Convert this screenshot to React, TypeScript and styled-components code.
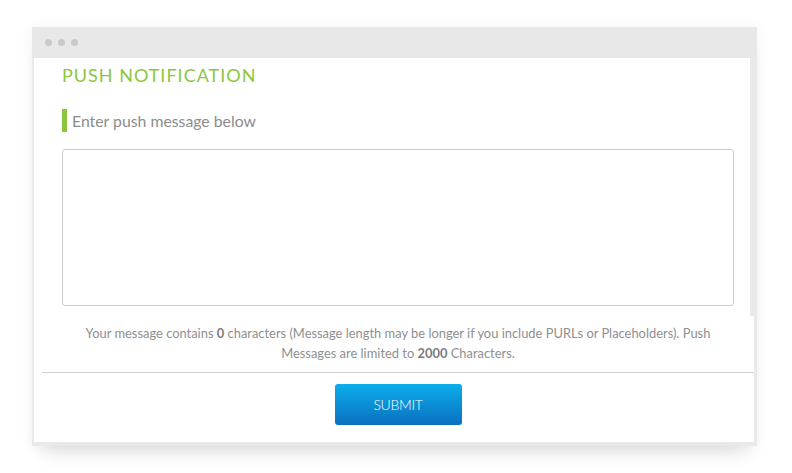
import React from "react";
import styled, { createGlobalStyle } from "styled-components";

const Global = createGlobalStyle`
  html, body { margin: 0; padding: 0; background: #ffffff; }
  body { font-family: Lato, "Open Sans", sans-serif; }
  * { box-sizing: border-box; }
`;

const Stage = styled.div`
  width: 792px;
  height: 473px;
  padding: 27px 0 0 32px;
  overflow: hidden;
`;

const Frame = styled.div`
  width: 725px;
  background: #e7e9ea;
  padding: 0 3px 4px 2px;
  box-shadow: 0 16px 18px -10px rgba(0, 0, 0, 0.12), 0 0 14px rgba(0, 0, 0, 0.05);
`;

const TitleBar = styled.div`
  height: 31px;
  margin: 0 -3px 0 -2px;
  background: #e8e8e8;
  display: flex;
  align-items: center;
  gap: 6px;
  padding-left: 13px;
`;

const Dot = styled.span`
  width: 7px;
  height: 7px;
  border-radius: 50%;
  background: #c9c9c9;
`;

const Upper = styled.div`
  background: #ffffff;
  margin-right: 4px;
  height: 258px;
  padding: 6px 16px 0 28px;
`;

const Title = styled.h1`
  margin: 0;
  font-family: Lato, sans-serif;
  font-weight: 400;
  font-size: 18px;
  line-height: 22px;
  letter-spacing: 1px;
  color: #8cc63e;
`;

const SubHead = styled.div`
  margin-top: 23px;
  height: 23px;
  display: flex;
  align-items: center;
  gap: 5px;
  font-size: 15.8px;
  color: #8c8c8c;
  &::before {
    content: "";
    width: 5px;
    height: 23px;
    background: #8cc63e;
  }
`;

const Message = styled.textarea`
  display: block;
  margin-top: 17px;
  width: 672px;
  height: 157px;
  border: 1px solid #cccccc;
  border-radius: 3px;
  resize: none;
  outline: none;
  background: #fff;
`;

const Lower = styled.div`
  background: #ffffff;
  height: 126px;
  padding-left: 8px;
  display: flex;
  flex-direction: column;
  align-items: center;
`;

const Info = styled.p`
  margin: 7px 0 0;
  width: 660px;
  text-align: center;
  font-size: 12.9px;
  line-height: 20px;
  color: #8f8f8f;
`;

const Count = styled.strong`
  font-weight: 700;
  color: #7c7c7c;
`;

const Divider = styled.hr`
  align-self: stretch;
  margin: 9px 0 0;
  border: 0;
  border-top: 1px solid #cfcfcf;
`;

const Submit = styled.button`
  margin-top: 11px;
  width: 127px;
  height: 41px;
  border: 0;
  border-radius: 3px;
  background: linear-gradient(#0badea, #0a70c0);
  color: #ffffff;
  font-family: Lato, sans-serif;
  font-weight: 300;
  font-size: 14px;
  letter-spacing: -0.3px;
  cursor: pointer;
`;

export default function App() {
  return (
    <>
      <Global />
      <Stage>
        <Frame>
          <TitleBar>
            <Dot />
            <Dot />
            <Dot />
          </TitleBar>
          <Upper>
            <Title>PUSH NOTIFICATION</Title>
            <SubHead>Enter push message below</SubHead>
            <Message />
          </Upper>
          <Lower>
            <Info>
              Your message contains <Count>0</Count> characters (Message length may be longer if you
              include PURLs or Placeholders). Push Messages are limited to <Count>2000</Count>{" "}
              Characters.
            </Info>
            <Divider />
            <Submit>SUBMIT</Submit>
          </Lower>
        </Frame>
      </Stage>
    </>
  );
}
